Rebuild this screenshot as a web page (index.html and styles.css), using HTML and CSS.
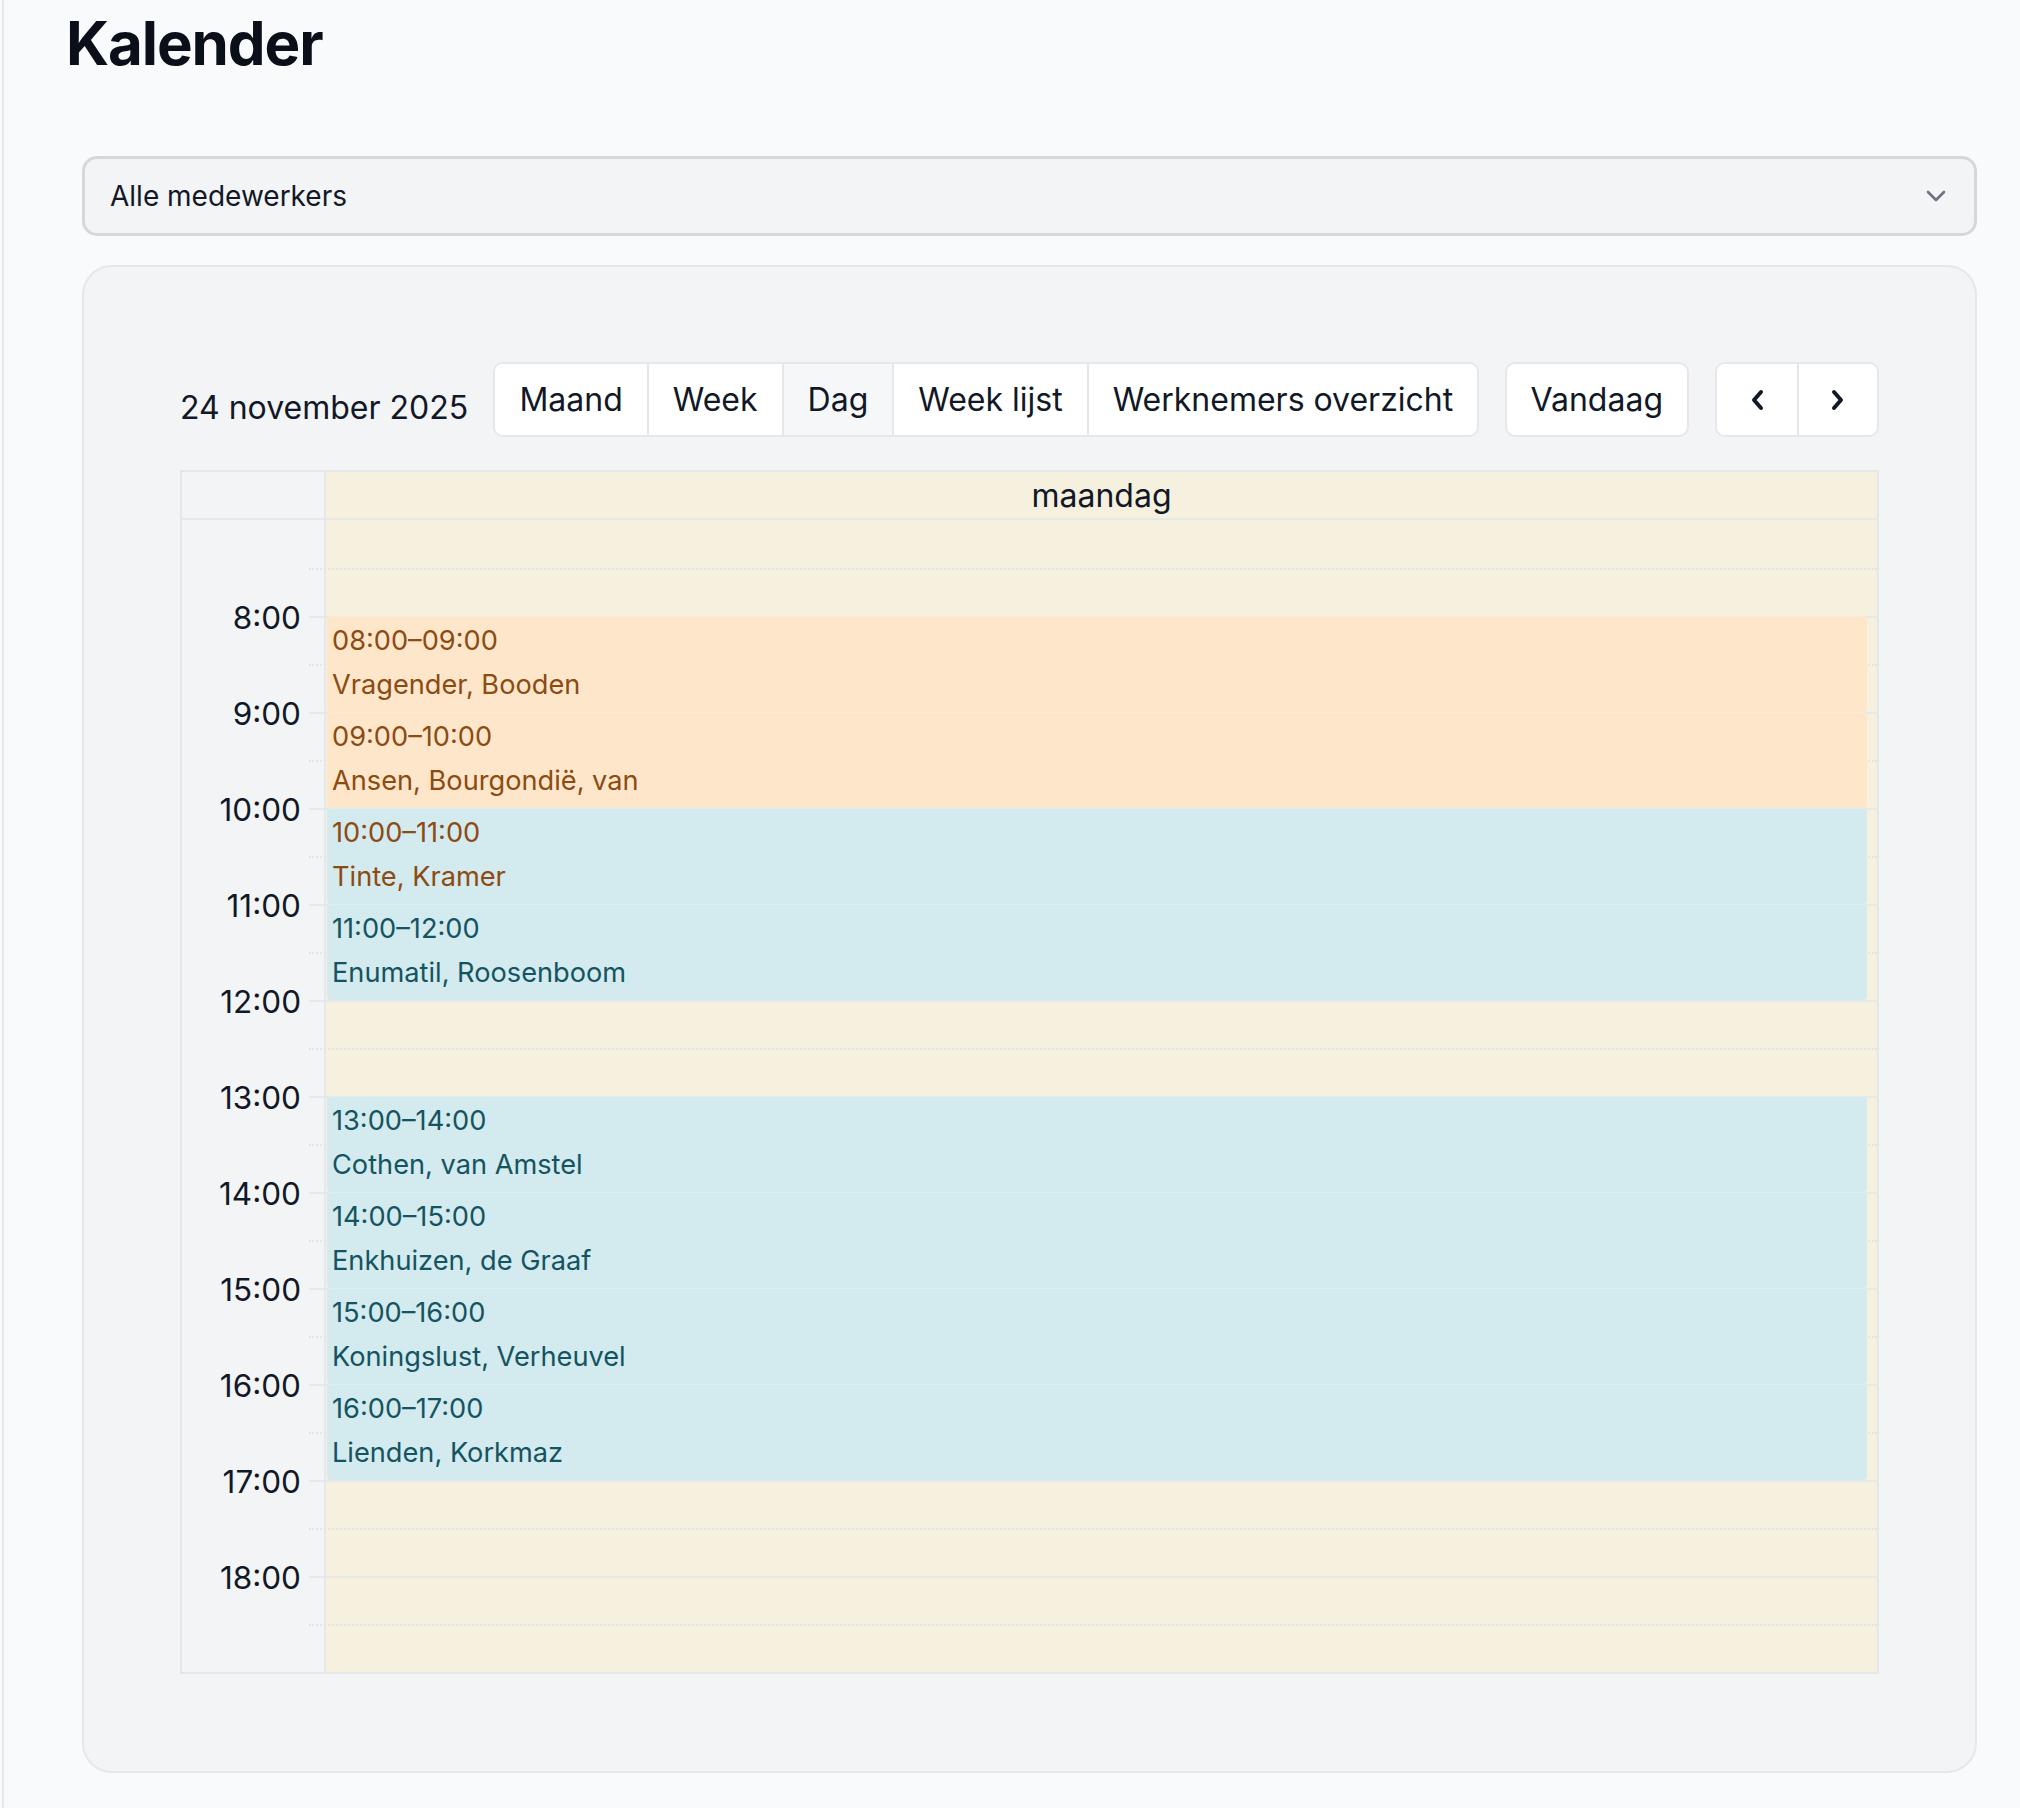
FILE: index.html
```html
<!DOCTYPE html>
<html lang="nl">
<head>
<meta charset="utf-8">
<title>Kalender</title>
<link rel="stylesheet" href="styles.css">
</head>
<body>
<main class="main">
  <h1 class="page-title">Kalender</h1>
  <div class="content">
    <div class="select">
      <span class="select-value">Alle medewerkers</span>
      <svg class="select-chevron" viewBox="0 0 20 12" width="20" height="12"><polyline points="2,2 10,10 18,2"/></svg>
    </div>
    <section class="card">
      <div class="toolbar">
        <h2 class="toolbar-title">24 november 2025</h2>
        <div class="btn-group">
          <button class="btn">Maand</button>
          <button class="btn">Week</button>
          <button class="btn active">Dag</button>
          <button class="btn">Week lijst</button>
          <button class="btn">Werknemers overzicht</button>
        </div>
        <div class="toolbar-right">
          <button class="btn single">Vandaag</button>
          <div class="btn-group">
            <button class="btn icon" aria-label="vorige"><svg viewBox="0 0 14 22" width="14" height="22"><polyline points="11,3 4,11 11,19"/></svg></button>
            <button class="btn icon" aria-label="volgende"><svg viewBox="0 0 14 22" width="14" height="22"><polyline points="3,3 10,11 3,19"/></svg></button>
          </div>
        </div>
      </div>
      <div class="cal">
        <div class="cal-head">
          <div class="axis-head"></div>
          <div class="day-head">maandag</div>
        </div>
        <div class="cal-body">
          <div class="axis-col"></div>
          <div class="day-col"></div>

          <div class="slot" style="grid-row:2"></div>
          <div class="slot hour" style="grid-row:3"></div>
          <div class="slot" style="grid-row:4"></div>
          <div class="slot hour" style="grid-row:5"></div>
          <div class="slot" style="grid-row:6"></div>
          <div class="slot hour" style="grid-row:7"></div>
          <div class="slot" style="grid-row:8"></div>
          <div class="slot hour" style="grid-row:9"></div>
          <div class="slot" style="grid-row:10"></div>
          <div class="slot hour" style="grid-row:11"></div>
          <div class="slot" style="grid-row:12"></div>
          <div class="slot hour" style="grid-row:13"></div>
          <div class="slot" style="grid-row:14"></div>
          <div class="slot hour" style="grid-row:15"></div>
          <div class="slot" style="grid-row:16"></div>
          <div class="slot hour" style="grid-row:17"></div>
          <div class="slot" style="grid-row:18"></div>
          <div class="slot hour" style="grid-row:19"></div>
          <div class="slot" style="grid-row:20"></div>
          <div class="slot hour" style="grid-row:21"></div>
          <div class="slot" style="grid-row:22"></div>
          <div class="slot hour" style="grid-row:23"></div>
          <div class="slot" style="grid-row:24"></div>

          <div class="time-label" style="grid-row:3">8:00</div>
          <div class="time-label" style="grid-row:5">9:00</div>
          <div class="time-label" style="grid-row:7">10:00</div>
          <div class="time-label" style="grid-row:9">11:00</div>
          <div class="time-label" style="grid-row:11">12:00</div>
          <div class="time-label" style="grid-row:13">13:00</div>
          <div class="time-label" style="grid-row:15">14:00</div>
          <div class="time-label" style="grid-row:17">15:00</div>
          <div class="time-label" style="grid-row:19">16:00</div>
          <div class="time-label" style="grid-row:21">17:00</div>
          <div class="time-label" style="grid-row:23">18:00</div>

          <div class="event orange" style="grid-row:3 / span 2"><div class="event-time">08:00–09:00</div><div class="event-title">Vragender, Booden</div></div>
          <div class="event orange" style="grid-row:5 / span 2"><div class="event-time">09:00–10:00</div><div class="event-title">Ansen, Bourgondië, van</div></div>
          <div class="event blue brown-text" style="grid-row:7 / span 2"><div class="event-time">10:00–11:00</div><div class="event-title">Tinte, Kramer</div></div>
          <div class="event blue" style="grid-row:9 / span 2"><div class="event-time">11:00–12:00</div><div class="event-title">Enumatil, Roosenboom</div></div>
          <div class="event blue" style="grid-row:13 / span 2"><div class="event-time">13:00–14:00</div><div class="event-title">Cothen, van Amstel</div></div>
          <div class="event blue" style="grid-row:15 / span 2"><div class="event-time">14:00–15:00</div><div class="event-title">Enkhuizen, de Graaf</div></div>
          <div class="event blue" style="grid-row:17 / span 2"><div class="event-time">15:00–16:00</div><div class="event-title">Koningslust, Verheuvel</div></div>
          <div class="event blue" style="grid-row:19 / span 2"><div class="event-time">16:00–17:00</div><div class="event-title">Lienden, Korkmaz</div></div>
        </div>
      </div>
    </section>
  </div>
</main>
</body>
</html>
```

FILE: styles.css
```css
* { box-sizing: border-box; }

html, body {
  margin: 0;
  padding: 0;
}

body {
  background: #f9fafb;
  font-family: Inter, "Noto Sans", "Liberation Sans", sans-serif;
  color: #111827;
}

.main {
  margin-left: 2px;
  border-left: 2px solid #e6e7ea;
  padding: 7px 43px 35px 62px;
  min-height: 1808px;
}

.page-title {
  margin: 0 0 77px;
  font-size: 60px;
  line-height: 72px;
  font-weight: 700;
  letter-spacing: -1.1px;
  color: #0b0f19;
}

.content {
  padding-left: 16px;
}

.select {
  height: 80px;
  border: 3px solid #d5d7dc;
  border-radius: 15px;
  background: #f3f4f6;
  display: flex;
  align-items: center;
  justify-content: space-between;
  padding: 0 28px 0 25px;
  font-size: 28px;
  color: #111827;
}

.select-chevron {
  fill: none;
  stroke: #6b7280;
  stroke-width: 2.6;
  stroke-linecap: round;
  stroke-linejoin: round;
}

.card {
  margin-top: 29px;
  border: 2px solid #e5e7eb;
  border-radius: 30px;
  background: #f3f4f6;
  padding: 95px 96px 97px;
}

.toolbar {
  display: flex;
  justify-content: space-between;
  align-items: center;
  height: 75px;
  margin-bottom: 33px;
}

.toolbar-title {
  margin: 0;
  padding-top: 16px;
  font-size: 32px;
  font-weight: 400;
  color: #111827;
}

.toolbar-right {
  display: flex;
  gap: 26px;
}

.btn-group {
  display: flex;
  height: 75px;
  border: 2px solid #e5e7eb;
  border-radius: 10px;
  background: #fff;
  overflow: hidden;
}

.btn {
  font-family: inherit;
  font-size: 32px;
  color: #111827;
  background: #fff;
  border: 0;
  padding: 0 24px;
  height: 100%;
  cursor: pointer;
}

.btn-group .btn + .btn {
  border-left: 2px solid #e5e7eb;
}

.btn.active {
  background: #f6f7f9;
}

.btn.single {
  height: 75px;
  border: 2px solid #e5e7eb;
  border-radius: 10px;
}

.btn.icon {
  width: 80px;
  padding: 0;
  display: flex;
  align-items: center;
  justify-content: center;
}

.btn.icon svg {
  fill: none;
  stroke: #111827;
  stroke-width: 4;
  stroke-linecap: round;
  stroke-linejoin: round;
}

.cal {
  border: 2px solid #e5e7eb;
}

.cal-head {
  display: grid;
  grid-template-columns: 144px 1fr;
  height: 48px;
  border-bottom: 2px solid #e5e7eb;
}

.axis-head {
  border-right: 2px solid #e5e7eb;
}

.day-head {
  background: #f6f0de;
  display: flex;
  align-items: center;
  justify-content: center;
  font-size: 32px;
  color: #111827;
}

.cal-body {
  display: grid;
  grid-template-columns: 144px 1fr;
  grid-template-rows: repeat(24, 48px);
}

.axis-col {
  grid-column: 1;
  grid-row: 1 / -1;
  border-right: 2px solid #e5e7eb;
}

.day-col {
  grid-column: 2;
  grid-row: 1 / -1;
  background: #f6f0de;
}

.slot {
  grid-column: 2;
  margin-left: -17px;
  border-top: 2px dotted #e3e4e6;
}

.slot.hour {
  border-top: 2px solid #e5e7eb;
}

.time-label {
  grid-column: 1;
  align-self: start;
  justify-self: end;
  padding-right: 25px;
  font-size: 31.5px;
  line-height: 38px;
  color: #111827;
  transform: translateY(-17px);
}

.event {
  grid-column: 2;
  margin: 0 10px 0 1px;
  padding: 2px 5px 0;
  border-radius: 4px;
  border-top: 1px solid rgba(255, 255, 255, 0.22);
  font-size: 27.2px;
  line-height: 44px;
  overflow: hidden;
  white-space: nowrap;
}

.event.orange {
  background: #fee6cb;
  color: #8b4b12;
}

.event.blue {
  background: #d3eaef;
  color: #145461;
}

.event.blue.brown-text {
  color: #8b4b12;
}
```
